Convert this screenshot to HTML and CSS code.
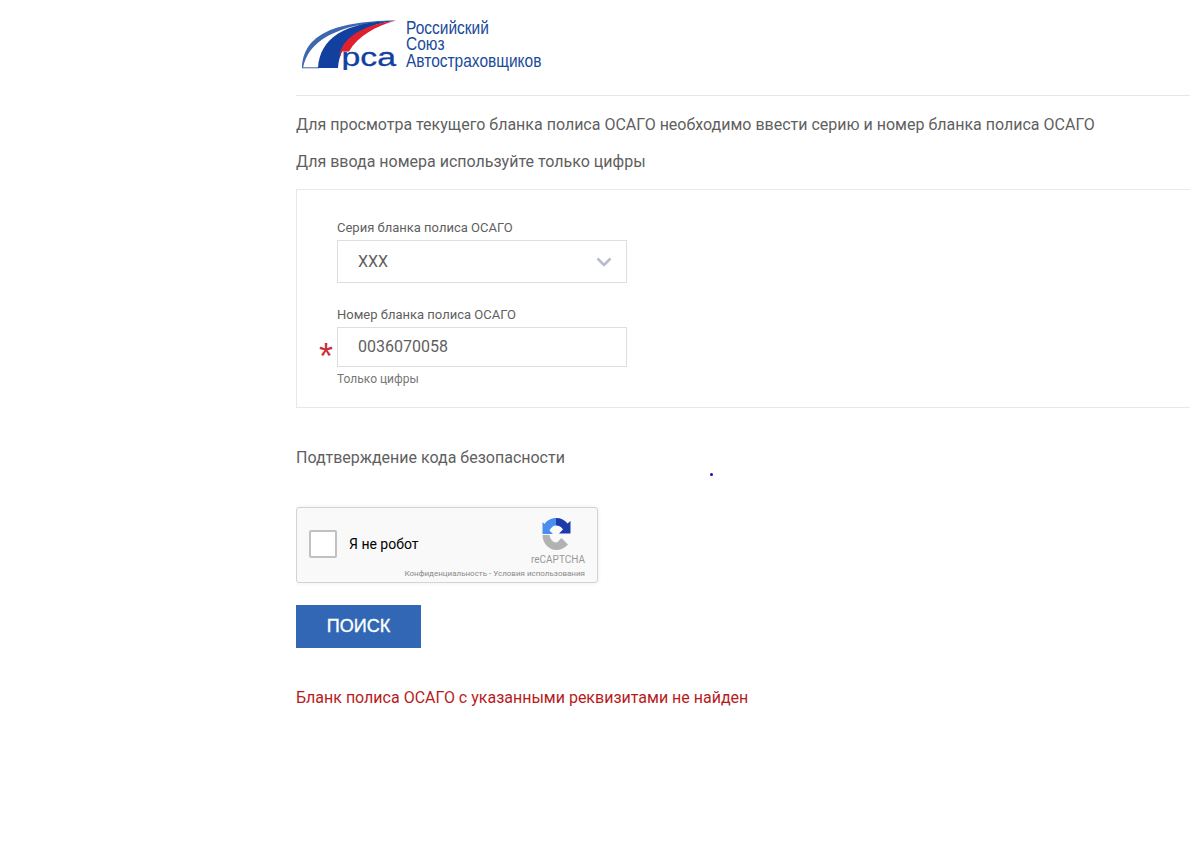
FILE: index.html
```html
<!DOCTYPE html>
<html lang="ru">
<head>
<meta charset="utf-8">
<title>РСА</title>
<link rel="stylesheet" href="styles.css">
</head>
<body>
<main class="page">
  <header class="brand">
    <svg class="brand-mark" viewBox="0 0 100 52" width="100" height="52" aria-hidden="true">
      <path d="M2 50C3 20 28 3 96 2.500C34 6 8 24 3 50Z" fill="#3d68b0"/>
      <path d="M2 49.800H19" stroke="#3d68b0" stroke-width="1" fill="none"/>
      <path d="M18 50C20 20 44 4 96 2.500C56 8 40 26 38 50Z" fill="#12409f"/>
      <path d="M39.500 38C41 24 56 8 96 2.600C76 8 58 18 49 33.500H41L40.500 38Z" fill="#e0202f"/>
      <text class="brand-rsa" x="41.500" y="47.500" textLength="54.500" lengthAdjust="spacingAndGlyphs">рса</text>
    </svg>
    <div class="brand-name">
      <span>Российский</span>
      <span>Союз</span>
      <span>Автостраховщиков</span>
    </div>
  </header>
  <hr class="rule">
  <p class="lead first">Для просмотра текущего бланка полиса ОСАГО необходимо ввести серию и номер бланка полиса ОСАГО</p>
  <p class="lead second">Для ввода номера используйте только цифры</p>

  <section class="card">
    <div class="field field-series">
      <label class="field-label">Серия бланка полиса ОСАГО</label>
      <div class="control control-select">
        <span>XXX</span>
        <svg class="chevron" viewBox="0 0 16 10" width="16" height="10" aria-hidden="true"><path d="M1.500 1.500L8 8L14.500 1.500" fill="none" stroke="#b4bccd" stroke-width="2.600"/></svg>
      </div>
    </div>
    <div class="field field-number">
      <label class="field-label">Номер бланка полиса ОСАГО</label>
      <div class="control control-input">
        <span class="required">*</span>
        <span>0036070058</span>
      </div>
      <div class="hint">Только цифры</div>
    </div>
  </section>

  <p class="lead captcha-title">Подтверждение кода безопасности</p>
  <span class="dot"></span>

  <div class="captcha">
    <span class="checkbox"></span>
    <span class="captcha-text">Я не робот</span>
    <div class="captcha-brand">
      <svg viewBox="0 0 32 32" width="32" height="32" aria-hidden="true">
        <path d="M16 0C11 0 7 2.500 4.500 6L2.500 4V16H13L9.500 12.500C11 9.500 13 7.500 16 7.500Z" fill="#4a8df0"/>
        <path d="M16 0C21 0 25 2 27.500 5.500L30.500 3V15.500H19L23 11.500C21.500 9 19 7.500 16 7.500Z" fill="#1c3aa9"/>
        <path d="M2.500 17H9.500C10 21 12.500 24.500 17 24.500L21.500 20L28 26.500C25 30 21 32 16.500 32C8.500 32 2.500 25 2.500 17Z" fill="#b2b2b2"/>
      </svg>
      <span class="captcha-name">reCAPTCHA</span>
    </div>
    <span class="captcha-terms">Конфиденциальность - Условия использования</span>
  </div>

  <button class="search" type="button">ПОИСК</button>
  <p class="error">Бланк полиса ОСАГО с указанными реквизитами не найден</p>
</main>
</body>
</html>
```
FILE: styles.css
```css
* { box-sizing: border-box; }
html, body { margin: 0; height: 848px; overflow: hidden; background: #fff; }
body { font-family: Roboto, "Liberation Sans", sans-serif; color: #5f5f5f; }

.page { position: relative; margin-left: 296px; width: 894px; height: 848px; overflow: hidden; }

.brand { display: flex; height: 95px; padding: 18px 0 0 4px; }
.brand-mark { display: block; flex: none; }
.brand-rsa { font-family: "Liberation Sans", sans-serif; font-size: 26px; stroke: #12409f; stroke-width: .3px; fill: #12409f; }
.brand-name { display: flex; flex-direction: column; margin: 1.500px 0 0 6px; font-family: "Liberation Sans", sans-serif; font-size: 17.500px; line-height: 16.500px; color: #1a4a9c; transform: scaleX(.885); transform-origin: left top; white-space: nowrap; }

.rule { margin: 0; border: 0; border-top: 1px solid #e6e6e6; }

.lead { margin: 0; font-size: 16px; line-height: 20px; white-space: nowrap; }
.first { margin-top: 19px; }
.second { margin-top: 17px; }

.card { width: 1000px; height: 219px; margin-top: 17px; padding: 28px 0 0 40px; border: 1px solid #e8e8e8; }
.field-label { display: block; font-size: 13px; line-height: 20px; color: #5f5f5f; }
.control { position: relative; display: flex; align-items: center; width: 290px; padding: 0 20px; border: 1px solid #dedede; font-size: 16px; color: #5f5f5f; }
.control-select { justify-content: space-between; height: 43px; margin-top: 2px; padding-right: 14px; }
.field-number { margin-top: 22px; }
.control-input { height: 40px; margin-top: 2px; padding-bottom: 2px; }
.chevron { display: block; margin-top: 1px; }
.required { position: absolute; left: -19px; top: 11px; font-family: "Liberation Sans", sans-serif; font-size: 36px; line-height: 36px; color: #cc2f36; }
.hint { margin-top: 4px; font-size: 12px; line-height: 16px; color: #777; }

.captcha-title { margin-top: 40px; }
.dot { position: absolute; left: 414px; top: 473px; width: 3px; height: 3px; border-radius: 50%; background: #1010c0; }

.captcha { position: relative; display: flex; align-items: center; width: 302px; height: 76px; margin-top: 39px; padding: 0 0 2px 12px; background: #f9f9f9; border: 1px solid #d3d3d3; border-radius: 3px; box-shadow: 0 0 4px rgba(0, 0, 0, .08); }
.checkbox { display: block; flex: none; width: 28px; height: 28px; background: #fff; border: 2px solid #c1c1c1; border-radius: 2px; }
.captcha-text { margin-left: 12px; font-size: 14px; color: #000; }
.captcha-brand { position: absolute; top: 10px; right: 12px; display: flex; flex-direction: column; align-items: center; }
.captcha-brand svg { display: block; margin-left: -3px; }
.captcha-name { margin-top: 4px; font-size: 10px; line-height: 12px; color: #999; }
.captcha-terms { position: absolute; right: 12px; bottom: 3px; font-size: 8px; line-height: 10px; color: #8a8a8a; white-space: nowrap; }

.search { display: block; width: 125px; height: 43px; margin-top: 22px; padding: 0; border: 0; background: #3167b5; color: #fff; font-family: "Liberation Sans", sans-serif; font-size: 18px; -webkit-text-stroke: .35px #fff; }
.error { margin: 40px 0 0; font-size: 16px; line-height: 20px; color: #b71c1c; white-space: nowrap; }
```
